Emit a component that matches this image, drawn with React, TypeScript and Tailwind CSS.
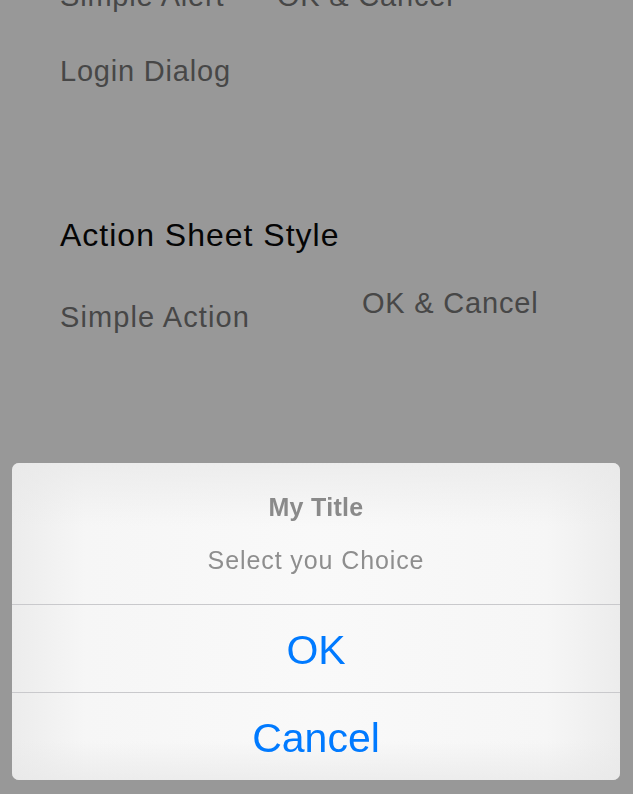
const font = { fontFamily: '"Liberation Sans", Arial, sans-serif' };

function ActionSheet() {
  return (
    <div className="fixed left-[12px] right-[13px] bottom-[14px] rounded-[7px] overflow-hidden text-center bg-[linear-gradient(to_right,#ececec_0%,#f6f6f6_12%,#f9f9f9_50%,#f6f6f6_88%,#ececec_100%)]">
      <div className="h-[141px] bg-[linear-gradient(to_bottom,rgba(232,232,232,0.7)_0%,rgba(250,250,250,0)_45%)]">
        <div className="pt-[29px] text-[25px] leading-[30px] font-bold tracking-[0.3px] text-[#8a8a8a]">My Title</div>
        <div className="mt-[23px] text-[25px] leading-[30px] tracking-[0.9px] text-[#8e8e8e]">Select you Choice</div>
      </div>
      <div className="h-px bg-[#c9c9cc]" />
      <div className="h-[87px] leading-[90px] text-[41px] text-[#007aff]">OK</div>
      <div className="h-px bg-[#c9c9cc]" />
      <div className="h-[87px] leading-[90px] text-[41px] text-[#007aff] bg-[linear-gradient(to_bottom,rgba(250,250,250,0)_55%,rgba(232,232,232,0.7)_100%)]">
        Cancel
      </div>
    </div>
  );
}

export default function App() {
  return (
    <div className="relative h-[794px] overflow-hidden bg-[#989898]" style={font}>
      <div className="pl-[60px] text-[29px] leading-[34px] tracking-[0.8px] text-[#474747]">
        <div className="flex mt-[-21px]">
          <div className="w-[217px]">Simple Alert</div>
          <div>OK &amp; Cancel</div>
        </div>
        <div className="mt-[41px]">Login Dialog</div>

        <h2 className="mt-[128px] text-[32px] leading-[38px] tracking-[1px] text-[#050505]">Action Sheet Style</h2>
        <div className="flex items-start mt-[32px]">
          <div className="w-[302px] mt-[14px] tracking-[1.1px]">Simple Action</div>
          <div>OK &amp; Cancel</div>
        </div>
      </div>
      <ActionSheet />
    </div>
  );
}
